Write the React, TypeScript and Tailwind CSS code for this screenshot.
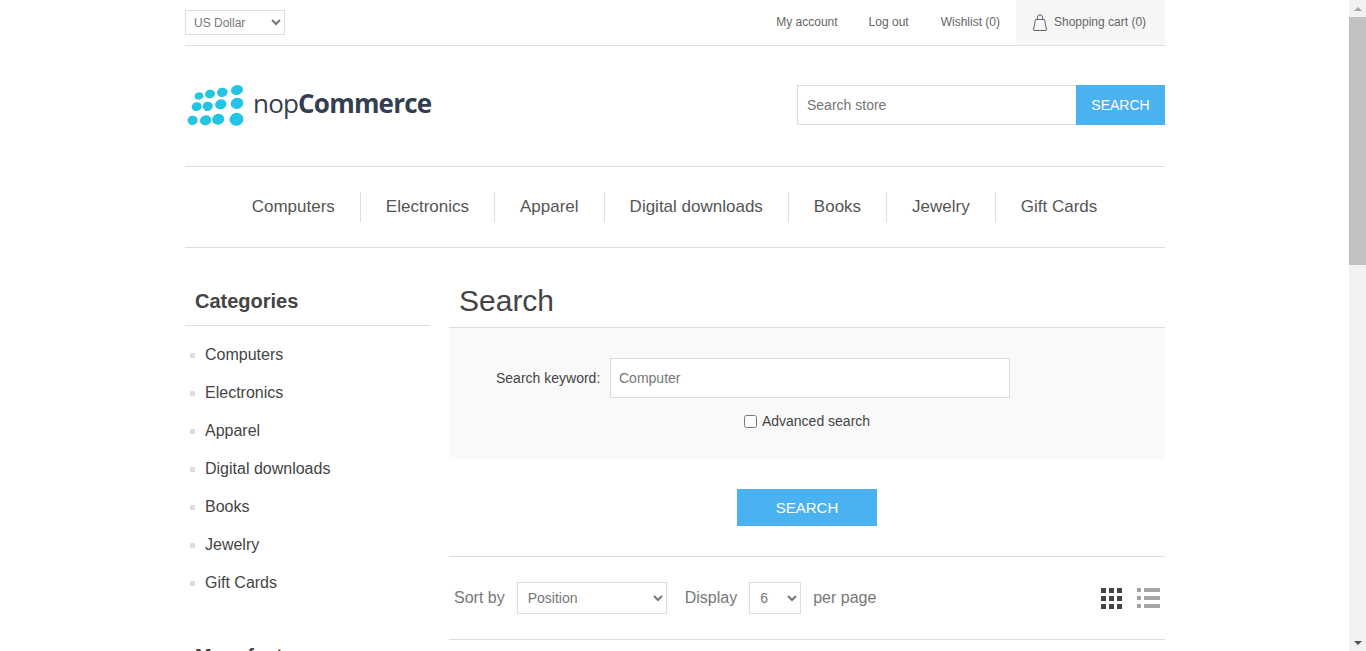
import React from "react";

const navItems = ["Computers", "Electronics", "Apparel", "Digital downloads", "Books", "Jewelry", "Gift Cards"];
const categories = ["Computers", "Electronics", "Apparel", "Digital downloads", "Books", "Jewelry", "Gift Cards"];

function Logo() {
  const dots = [
    [13, 12, 4.4, 3.7], [24, 10, 5.1, 4.3], [36.3, 8.3, 5.4, 4.6], [51, 6, 6.1, 5],
    [10.7, 22.6, 5.1, 4.4], [21.7, 22.3, 5.1, 4.6], [34.7, 20.3, 5.7, 5], [51, 19.3, 6.4, 5.6],
    [6.6, 36.3, 5.1, 4.6], [19.6, 36.3, 5.7, 5], [32.2, 35.3, 6.1, 5.4], [50.5, 35.3, 7, 6.4],
  ];
  return (
    <div className="flex items-center">
      <svg width="60" height="46" viewBox="0 0 60 46" className="shrink-0">
        {dots.map((d, i) => (
          <ellipse key={i} cx={d[0]} cy={d[1]} rx={d[2]} ry={d[3]} fill="#22c6e4" transform={`rotate(-15 ${d[0]} ${d[1]})`} />
        ))}
      </svg>
      <span className="ml-[7px] -mt-[8px] text-[26px] leading-none tracking-[-0.8px] text-[#333e50] font-['Open_Sans',sans-serif]">
        <span className="font-normal">nop</span>
        <span className="font-bold">Commerce</span>
      </span>
    </div>
  );
}

function BagIcon() {
  return (
    <svg width="14" height="17" viewBox="0 0 14 17" fill="none" stroke="#666" strokeWidth="1">
      <path d="M2.5 5.5 L11.5 5.5 L13.5 16 Q13.5 16.5 13 16.5 L1 16.5 Q0.5 16.5 0.5 16 Z" strokeLinejoin="round" />
      <path d="M4.5 5.5 V3 Q4.5 0.8 7 0.8 Q9.5 0.8 9.5 3 V5.5" />
    </svg>
  );
}

function GridIcon() {
  return (
    <div className="grid grid-cols-3 gap-[3px]">
      {Array.from({ length: 9 }).map((_, i) => (
        <div key={i} className="size-[5px] bg-[#444]" />
      ))}
    </div>
  );
}

function ListIcon() {
  return (
    <div className="flex flex-col gap-[4px]">
      {[0, 1, 2].map((i) => (
        <div key={i} className="flex gap-[3px]">
          <div className="h-[4px] w-[4px] bg-[#a6a6a6]" />
          <div className="h-[4px] w-[16px] bg-[#a6a6a6]" />
        </div>
      ))}
    </div>
  );
}

function Scrollbar() {
  return (
    <div className="fixed top-0 right-0 bottom-0 w-[17px] bg-[#f1f1f1] flex flex-col">
      <div className="h-[17px] flex items-center justify-center">
        <div className="border-x-[4px] border-b-[4px] border-x-transparent border-b-[#a3a3a3]" />
      </div>
      <div className="h-[248px] bg-[#c1c1c1]" />
      <div className="flex-1" />
      <div className="h-[17px] flex items-center justify-center">
        <div className="border-x-[4px] border-t-[4px] border-x-transparent border-t-[#505050]" />
      </div>
    </div>
  );
}

export default function App() {
  return (
    <div className="w-full pr-[16px] font-['Liberation_Sans',Arial,sans-serif] text-[#444] bg-white">
      <div className="w-[980px] mx-auto pb-[960px]">
        {/* HEADER LINKS */}
        <div className="flex justify-between h-[46px] border-b border-[#ddd]">
          <div className="flex pt-[10px]">
            <select className="w-[100px] h-[25px] border border-[#ddd] bg-white pl-[4px] text-[12px] text-[#777]">
              <option>US Dollar</option>
            </select>
          </div>
          <div className="flex text-[12px] text-[#666]">
            <a className="leading-[45px] mr-[31px]">My account</a>
            <a className="leading-[45px] mr-[32px]">Log out</a>
            <a className="leading-[45px] mr-[16px]">Wishlist (0)</a>
            <div className="w-[149px] bg-[#f6f6f6] flex items-center pl-[17px] pb-[1px]">
              <BagIcon />
              <span className="ml-[7px]">Shopping cart (0)</span>
            </div>
          </div>
        </div>

        {/* LOGO + SEARCH */}
        <div className="flex justify-between h-[120px] border-b border-[#ddd] box-content">
          <div className="pt-[38px] pl-[1px]">
            <Logo />
          </div>
          <div className="flex pt-[39px] h-[79px]">
            <input
              placeholder="Search store"
              className="w-[279px] h-[40px] border border-[#ddd] border-r-0 px-[9px] text-[14px] text-[#777] placeholder:text-[#757575]"
            />
            <button className="w-[89px] h-[40px] bg-[#4ab2f1] text-white text-[14px]">SEARCH</button>
          </div>
        </div>

        {/* NAV */}
        <div className="flex justify-center items-center h-[80px] pr-[1px] border-b border-[#ddd] box-content">
          {navItems.map((item, i) => (
            <div key={i} className={`px-[25px] h-[30px] leading-[30px] text-[17px] text-[#555] ${i > 0 ? "border-l border-[#ddd]" : ""}`}>
              {item}
            </div>
          ))}
        </div>

        {/* BODY */}
        <div className="flex justify-between pt-[36px]">
          <div className="w-[245px]">
            <div className="h-[41px] border-b border-[#ddd] pl-[10px] text-[20px] font-bold text-[#444] leading-[34px] box-content">
              Categories
            </div>
            <ul className="pt-[10px]">
              {categories.map((c) => (
                <li key={c} className="flex items-center h-[38px] pl-[5px] text-[16px] text-[#444]">
                  <span className="size-[5px] bg-[#ddd] mr-[10px] mt-[1px]" />
                  {c}
                </li>
              ))}
            </ul>
            <div className="mt-[37px] pl-[10px] text-[20px] font-bold leading-[34px]">Manufacturers</div>
          </div>

          <div className="w-[716px]">
            <div className="h-[43px] pl-[10px] text-[30px] leading-[34px] text-[#444]">Search</div>
            <div className="h-[132px] bg-[#f9f9f9] border-t border-[#ddd] pt-[30px]">
              <div className="flex items-center">
                <label className="ml-[47px] w-[104px] text-[14px] text-[#444] whitespace-nowrap">Search keyword:</label>
                <input
                  defaultValue="Computer"
                  className="ml-[10px] w-[400px] h-[40px] border border-[#ddd] bg-white px-[8px] text-[14px] text-[#777]"
                />
              </div>
              <div className="flex items-center justify-center mt-[13px]">
                <input type="checkbox" className="size-[13px] mr-[5px] appearance-auto" />
                <label className="text-[14px] text-[#444]">Advanced search</label>
              </div>
            </div>
            <div className="flex justify-center pt-[30px] pb-[30px] border-b border-[#ddd]">
              <button className="w-[140px] h-[37px] pt-[1px] bg-[#4ab2f1] text-white text-[15px]">SEARCH</button>
            </div>
            <div className="flex items-center h-[82px] border-b border-[#ddd] box-content pl-[5px] pr-[5px] text-[16px] text-[#777]">
              <span>Sort by</span>
              <select className="ml-[12px] w-[150px] h-[32px] border border-[#ddd] bg-white pl-[6px] text-[14px] text-[#777]">
                <option>Position</option>
              </select>
              <span className="ml-[18px]">Display</span>
              <select className="ml-[12px] w-[52px] h-[32px] border border-[#ddd] bg-white pl-[6px] text-[14px] text-[#777]">
                <option>6</option>
              </select>
              <span className="ml-[12px]">per page</span>
              <div className="ml-auto flex items-center gap-[15px]">
                <GridIcon />
                <ListIcon />
              </div>
            </div>
          </div>
        </div>
      </div>
      <Scrollbar />
    </div>
  );
}
